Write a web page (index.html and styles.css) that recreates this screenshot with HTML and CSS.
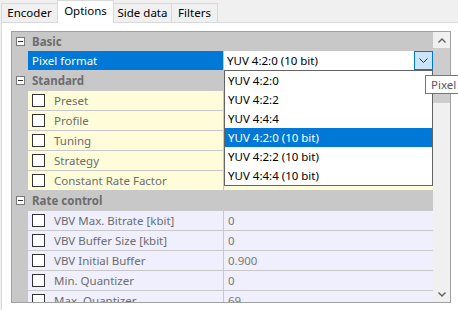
FILE: index.html
```html
<!DOCTYPE html>
<html>
<head>
<meta charset="utf-8">
<link rel="stylesheet" href="styles.css">
</head>
<body>
<div class="tabs">
  <div class="tab tab-encoder">Encoder</div>
  <div class="tab tab-options active">Options</div>
  <div class="tab tab-side">Side data</div>
  <div class="tab tab-filters">Filters</div>
</div>
<div class="panel">
  <div class="grid">
    <div class="rows">
      <div class="row cat first"><span class="margin"><span class="toggle"></span></span><span class="cat-label">Basic</span></div>
      <div class="row sel"><span class="margin"></span><span class="label plain">Pixel format</span><span class="value combo">YUV 4:2:0 (10 bit)<span class="combo-btn"><svg width="9" height="5" viewBox="0 0 9 5"><polyline points="0.5,0.5 4.5,4.5 8.5,0.5" fill="none" stroke="#333" stroke-width="1"/></svg></span></span></div>
      <div class="row cat"><span class="margin"><span class="toggle"></span></span><span class="cat-label">Standard</span></div>
      <div class="row std"><span class="margin"></span><span class="label"><span class="check"></span>Preset</span><span class="value"></span></div>
      <div class="row std"><span class="margin"></span><span class="label"><span class="check"></span>Profile</span><span class="value"></span></div>
      <div class="row std"><span class="margin"></span><span class="label"><span class="check"></span>Tuning</span><span class="value"></span></div>
      <div class="row std"><span class="margin"></span><span class="label"><span class="check"></span>Strategy</span><span class="value"></span></div>
      <div class="row std"><span class="margin"></span><span class="label"><span class="check"></span>Constant Rate Factor</span><span class="value"></span></div>
      <div class="row cat"><span class="margin"><span class="toggle"></span></span><span class="cat-label">Rate control</span></div>
      <div class="row rc"><span class="margin"></span><span class="label"><span class="check"></span>VBV Max. Bitrate [kbit]</span><span class="value">0</span></div>
      <div class="row rc"><span class="margin"></span><span class="label"><span class="check"></span>VBV Buffer Size [kbit]</span><span class="value">0</span></div>
      <div class="row rc"><span class="margin"></span><span class="label"><span class="check"></span>VBV Initial Buffer</span><span class="value">0.900</span></div>
      <div class="row rc"><span class="margin"></span><span class="label"><span class="check"></span>Min. Quantizer</span><span class="value">0</span></div>
      <div class="row rc"><span class="margin"></span><span class="label"><span class="check"></span>Max. Quantizer</span><span class="value">69</span></div>
    </div>
    <div class="scrollbar">
      <div class="sb-btn"><svg width="8" height="5" viewBox="0 0 8 5"><polyline points="0.5,4.5 4,1 7.5,4.5" fill="none" stroke="#606060" stroke-width="1.4"/></svg></div>
      <div class="sb-thumb"></div>
      <div class="sb-track"></div>
      <div class="sb-btn"><svg width="8" height="5" viewBox="0 0 8 5"><polyline points="0.5,0.5 4,4 7.5,0.5" fill="none" stroke="#606060" stroke-width="1.4"/></svg></div>
    </div>
    <div class="dropdown">
      <div class="item">YUV 4:2:0</div>
      <div class="item">YUV 4:2:2</div>
      <div class="item">YUV 4:4:4</div>
      <div class="item hl">YUV 4:2:0 (10 bit)</div>
      <div class="item">YUV 4:2:2 (10 bit)</div>
      <div class="item">YUV 4:4:4 (10 bit)</div>
    </div>
  </div>
</div>
<div class="tooltip">Pixel format</div>
</body>
</html>
```

FILE: styles.css
```css
* { box-sizing: border-box; }
html, body { margin: 0; padding: 0; }
body {
  width: 458px;
  height: 310px;
  overflow: hidden;
  background: #f0f0f0;
  font-family: "Noto Sans", "Liberation Sans", sans-serif;
  font-size: 11.5px;
  color: #000;
  position: relative;
}
.tabs {
  display: flex;
  align-items: flex-end;
  height: 22px;
  padding-left: 1px;
}
.tab {
  height: 19px;
  border: 1px solid #d9d9d9;
  border-bottom: none;
  background: #f0f0f0;
  text-align: center;
  line-height: 18px;
  font-size: 11.5px;
  margin-right: -1px;
}
.tab-encoder { width: 57px; }
.tab-options { width: 57px; }
.tab-side { width: 59px; }
.tab-filters { width: 47px; }
.tab.active {
  position: relative;
  z-index: 1;
  height: 23px;
  margin-bottom: -1px;
  background: #fff;
  line-height: 19px;
}
.panel {
  margin-left: 1px;
  border-left: 1px solid #d9d9d9;
  border-top: 1px solid #d9d9d9;
  background: #fff;
  height: 288px;
  padding: 8px 0 0 9px;
}
.grid {
  position: relative;
  width: 440px;
  height: 272px;
  border: 1px solid #a0a0a0;
  display: flex;
  overflow: hidden;
}
.rows {
  width: 421px;
  display: flex;
  flex-direction: column;
}
.row {
  display: flex;
  flex: none;
  height: 20px;
  border-bottom: 1px solid #c8c8c8;
  background: #c8c8c8;
}
.row.first { height: 19px; }
.margin {
  width: 16px;
  flex: none;
  background: #c8c8c8;
  position: relative;
}
.toggle {
  position: absolute;
  left: 4px;
  top: 5px;
  width: 9px;
  height: 9px;
  border: 1px solid #7a7a7a;
  background: #fff;
}
.toggle::after {
  content: "";
  position: absolute;
  left: 1px;
  top: 3px;
  width: 5px;
  height: 1px;
  background: #333;
}
.cat-label {
  padding-left: 4px;
  line-height: 19px;
  font-weight: bold;
  color: #6d6d6d;
}
.label {
  width: 196px;
  flex: none;
  border-right: 1px solid #c8c8c8;
  display: flex;
  align-items: center;
  padding-left: 4px;
  color: #6d6d6d;
  white-space: nowrap;
}
.check {
  width: 13px;
  height: 13px;
  border: 1px solid #333;
  background: #fff;
  margin-right: 9px;
  flex: none;
}
.value {
  flex: 1;
  display: flex;
  align-items: center;
  padding-left: 4px;
  color: #7b7b6b;
  white-space: nowrap;
}
.std .label, .std .value { background: #fefcd9; }
.rc .label, .rc .value { background: #efeffd; }
.sel .label { background: #0078d7; color: #fff; }
.sel .value { background: #fff; color: #000; position: relative; padding-left: 3px; }
.combo-btn {
  position: absolute;
  right: 0;
  top: 0;
  width: 19px;
  height: 19px;
  border: 1px solid #0078d7;
  background: #cce4f7;
  display: flex;
  align-items: center;
  justify-content: center;
}
.scrollbar {
  width: 17px;
  flex: none;
  display: flex;
  flex-direction: column;
  background: #f0f0f0;
}
.sb-btn {
  height: 16px;
  flex: none;
  display: flex;
  align-items: center;
  justify-content: center;
}
.sb-thumb {
  height: 55px;
  flex: none;
  background: #cdcdcd;
}
.sb-track { flex: 1; }
.dropdown {
  position: absolute;
  left: 212px;
  top: 38px;
  width: 209px;
  height: 116px;
  border: 1px solid #646464;
  background: #fff;
}
.item {
  height: 19px;
  line-height: 19px;
  padding-left: 3px;
  color: #000;
  white-space: nowrap;
}
.item.hl { background: #0078d7; color: #fff; }
.tooltip {
  position: absolute;
  left: 425px;
  top: 75px;
  height: 19px;
  border: 1px solid #767676;
  background: #fff;
  padding: 0 5px;
  line-height: 17px;
  color: #575757;
  white-space: nowrap;
}
```
